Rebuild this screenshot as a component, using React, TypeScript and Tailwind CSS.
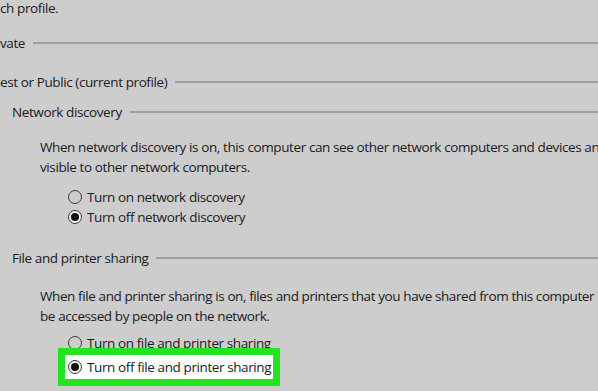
import { type JSX } from "react";

function SectionHeader({ label, indent = 0 }: { label: string; indent?: number }): JSX.Element {
  return (
    <div className="flex h-[20px] items-center gap-[8px]" style={{ paddingLeft: indent }}>
      <span className="whitespace-nowrap">{label}</span>
      <div className="h-[2px] flex-1 bg-[#9e9e9e]" />
    </div>
  );
}

function Radio({ checked, label }: { checked?: boolean; label: string }): JSX.Element {
  return (
    <div className="flex h-[20px] items-center gap-[5px] whitespace-nowrap">
      <span
        className={
          "flex h-[14px] w-[14px] shrink-0 items-center justify-center rounded-full border border-[#3a3a3a] " +
          (checked ? "bg-[#f4f4f4]" : "bg-transparent")
        }
      >
        {checked && <span className="h-[8px] w-[8px] rounded-full bg-[#111]" />}
      </span>
      <span>{label}</span>
    </div>
  );
}

export default function App(): JSX.Element {
  return (
    <div className="h-[391px] w-[598px] overflow-hidden bg-[#cdcdcd] font-['Segoe_UI','Open_Sans',sans-serif] text-[13.5px] leading-[20px] tracking-[-0.4px] text-[#1b1b1b]">
      <div className="mt-[-2px] h-[20px] whitespace-nowrap">ch profile.</div>

      <div className="mt-[15px]">
        <SectionHeader label="vate" />
      </div>

      <div className="mt-[19px]">
        <SectionHeader label="est or Public (current profile)" />
      </div>

      <div className="mt-[10px]">
        <SectionHeader label="Network discovery" indent={12} />
      </div>

      <div className="mt-[15px] pl-[40px] whitespace-nowrap">
        <div>When network discovery is on, this computer can see other network computers and devices and</div>
        <div>visible to other network computers.</div>
      </div>

      <div className="mt-[10px] pl-[68px]">
        <Radio label="Turn on network discovery" />
        <Radio checked label="Turn off network discovery" />
      </div>

      <div className="mt-[21px]">
        <SectionHeader label="File and printer sharing" indent={12} />
      </div>

      <div className="mt-[18px] pl-[40px] whitespace-nowrap">
        <div>When file and printer sharing is on, files and printers that you have shared from this computer</div>
        <div>be accessed by people on the network.</div>
      </div>

      <div className="mt-[7px] pl-[68px]">
        <Radio label="Turn on file and printer sharing" />
      </div>

      <div className="relative ml-[58px] mt-[-5px] w-[222px] border-[7px] border-[#22e41f]">
        <div className="h-[24px] bg-white pl-[3px] pt-[2px]">
          <Radio checked label="Turn off file and printer sharing" />
        </div>
      </div>
    </div>
  );
}
